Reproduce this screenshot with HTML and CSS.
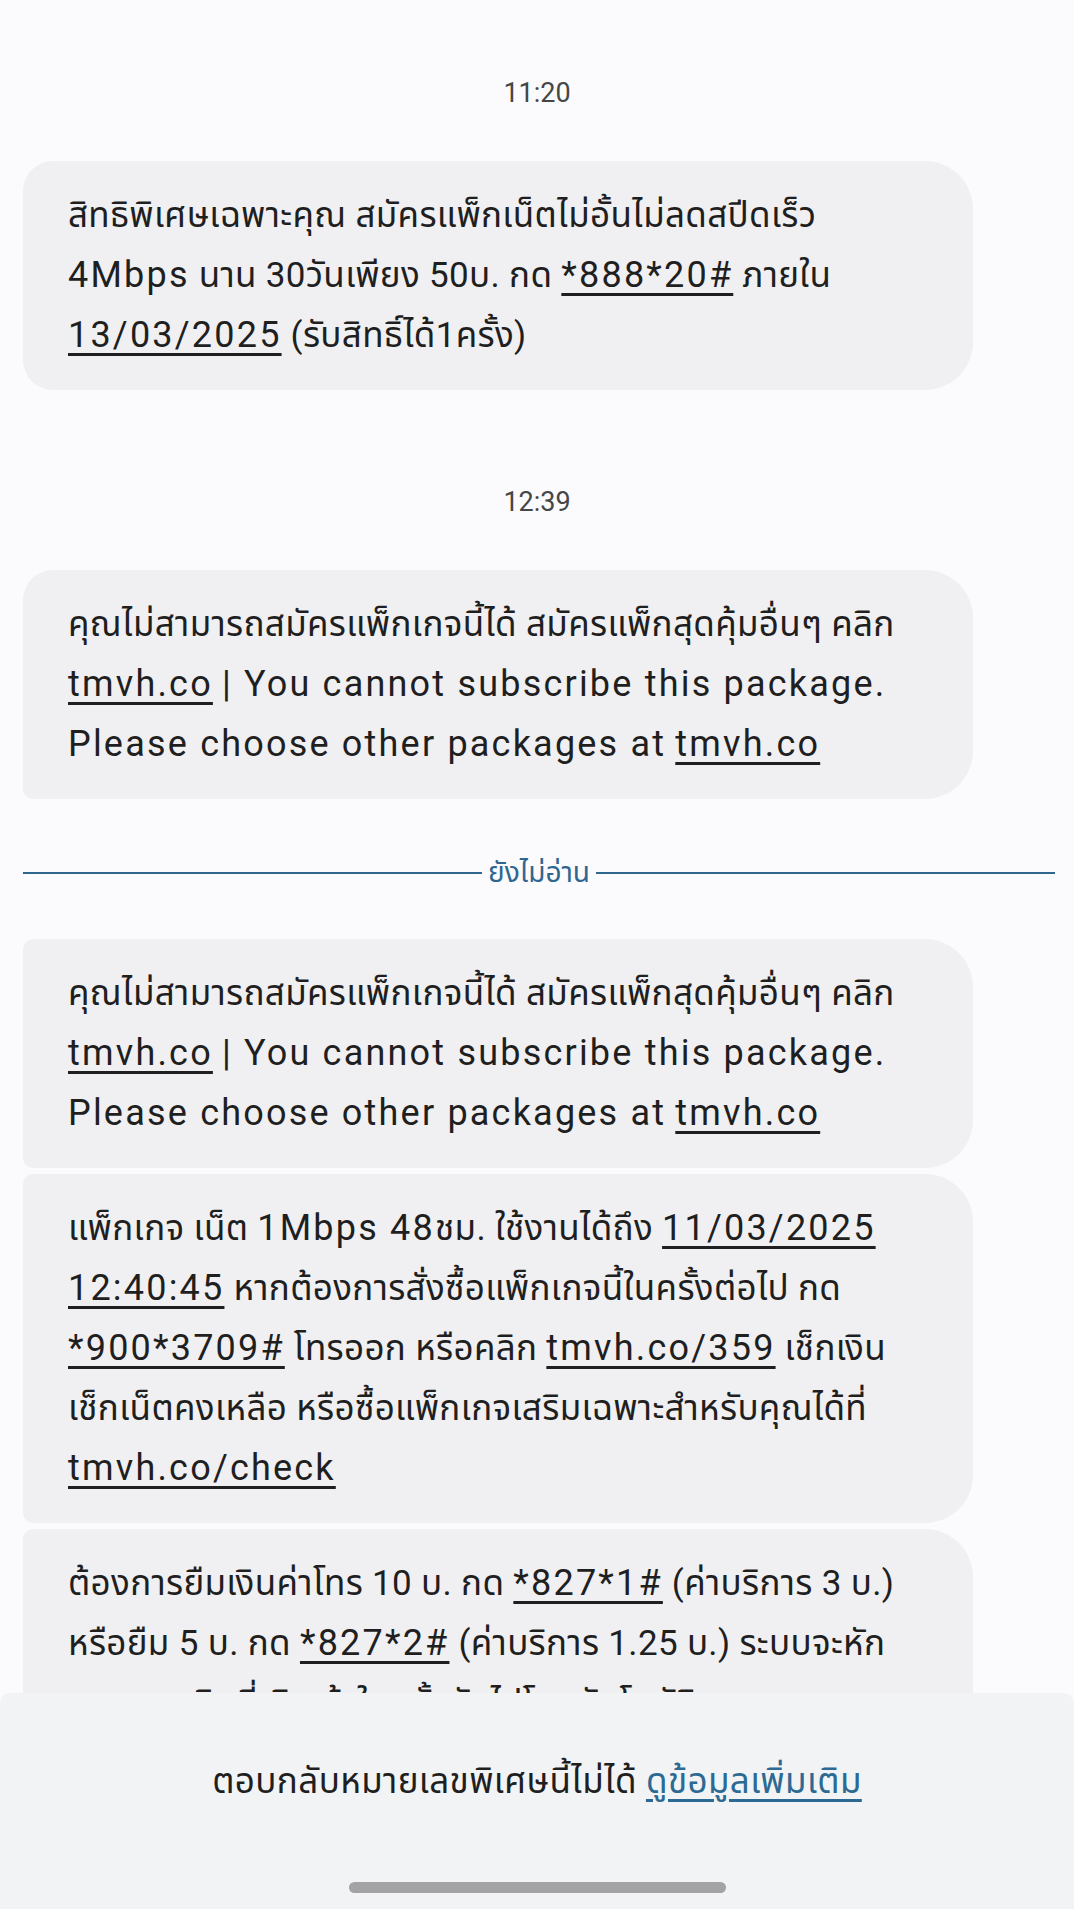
FILE: index.html
```html
<!DOCTYPE html>
<html lang="th">

<head>
    <meta charset="UTF-8">
    <meta name="viewport" content="width=device-width, initial-scale=1.0">
    <title>ข้อความ</title>
    <link rel="stylesheet" href="styles.css">
</head>

<body>
    <div class="thread">
        <div class="time">11:20</div>
        <div class="bubble single">
            <p>สิทธิพิเศษเฉพาะคุณ สมัครแพ็กเน็ตไม่อั้นไม่ลดสปีดเร็ว<br>
                <span class="en">4Mbps</span> นาน 30วันเพียง 50บ. กด <a>*888*20#</a> ภายใน<br>
                <a>13/03/2025</a> (รับสิทธิ์ได้1ครั้ง)</p>
        </div>

        <div class="time">12:39</div>
        <div class="bubble first">
            <p>คุณไม่สามารถสมัครแพ็กเกจนี้ได้ สมัครแพ็กสุดคุ้มอื่นๆ คลิก<br>
                <a>tmvh.co</a> <span class="en">| You cannot subscribe this package.</span><br>
                <span class="en">Please choose other packages at</span> <a>tmvh.co</a></p>
        </div>

        <div class="unread">
            <span class="unread_line"></span>
            <span class="unread_text">ยังไม่อ่าน</span>
            <span class="unread_line"></span>
        </div>

        <div class="bubble middle">
            <p>คุณไม่สามารถสมัครแพ็กเกจนี้ได้ สมัครแพ็กสุดคุ้มอื่นๆ คลิก<br>
                <a>tmvh.co</a> <span class="en">| You cannot subscribe this package.</span><br>
                <span class="en">Please choose other packages at</span> <a>tmvh.co</a></p>
        </div>
        <div class="bubble middle">
            <p>แพ็กเกจ เน็ต <span class="en">1Mbps 48</span>ชม. ใช้งานได้ถึง <a>11/03/2025</a><br>
                <a>12:40:45</a> หากต้องการสั่งซื้อแพ็กเกจนี้ในครั้งต่อไป กด<br>
                <a>*900*3709#</a> โทรออก หรือคลิก <a>tmvh.co/359</a> เช็กเงิน<br>
                เช็กเน็ตคงเหลือ หรือซื้อแพ็กเกจเสริมเฉพาะสำหรับคุณได้ที่<br>
                <a>tmvh.co/check</a></p>
        </div>
        <div class="bubble middle">
            <p>ต้องการยืมเงินค่าโทร 10 บ. กด <a>*827*1#</a> (ค่าบริการ 3 บ.)<br>
                หรือยืม 5 บ. กด <a>*827*2#</a> (ค่าบริการ 1.25 บ.) ระบบจะหัก<br>
                จากยอดเงินที่เติมเข้าในครั้งถัดไปโดยอัตโนมัติ<br>
                สอบถามเพิ่มเติมโทร 1242</p>
        </div>
    </div>

    <div class="footer">
        <p class="footer_text">ตอบกลับหมายเลขพิเศษนี้ไม่ได้ <a>ดูข้อมูลเพิ่มเติม</a></p>
        <div class="home_bar"></div>
    </div>
</body>

</html>
```

FILE: styles.css
```css
* {
    box-sizing: border-box;
    margin: 0;
    padding: 0;
}

body {
    background: #fbfbfe;
    color: #1f1f1f;
    font-family: Roboto, "Noto Sans Thai", "Noto Sans", sans-serif;
    height: 1909px;
    overflow: hidden;
}

.thread {
    display: flex;
    flex-flow: column;
    padding: 73px 101px 0 23px;
}

.time {
    text-align: center;
    font-size: 27px;
    line-height: 40px;
    color: #444746;
    margin-bottom: 48px;
    padding-left: 78px;
}

.time+.bubble {
    margin-bottom: 92px;
}

.bubble {
    background: #f0f0f2;
    padding: 25px 20px 24px 45px;
    border-radius: 30px 48px 48px 30px;
    font-size: 35px;
    line-height: 60px;
    letter-spacing: 0.33px;
}

.bubble.first {
    border-radius: 30px 48px 48px 10px;
    margin-bottom: 0;
}

.bubble.middle {
    border-radius: 10px 48px 48px 10px;
    margin-bottom: 6px;
}

.bubble p {
    white-space: nowrap;
}

.bubble .en,
.bubble a {
    font-size: 36px;
    line-height: 1;
    letter-spacing: 2.2px;
}

a {
    text-decoration: underline;
    text-decoration-thickness: 3px;
    text-underline-offset: 6px;
}

.unread {
    display: flex;
    align-items: center;
    gap: 6px;
    margin: 59px -82px 51px 0;
    line-height: 30px;
}

.unread_line {
    flex: 1;
    height: 2px;
    background: #2f6690;
}

.unread_text {
    color: #2f6690;
    font-size: 28px;
}

.footer {
    position: fixed;
    left: 0;
    right: 0;
    bottom: 0;
    height: 216px;
    background: #f2f3f5;
    border-radius: 10px 10px 0 0;
    display: flex;
    flex-flow: column;
    align-items: center;
    padding-top: 66px;
}

.footer_text {
    font-size: 35px;
    line-height: 46px;
    letter-spacing: 0.4px;
    color: #1f1f1f;
}

.footer_text a {
    color: #2d6a93;
}

.home_bar {
    margin-top: auto;
    margin-bottom: 16px;
    width: 377px;
    height: 11px;
    border-radius: 6px;
    background: #a3a3a5;
}
```
